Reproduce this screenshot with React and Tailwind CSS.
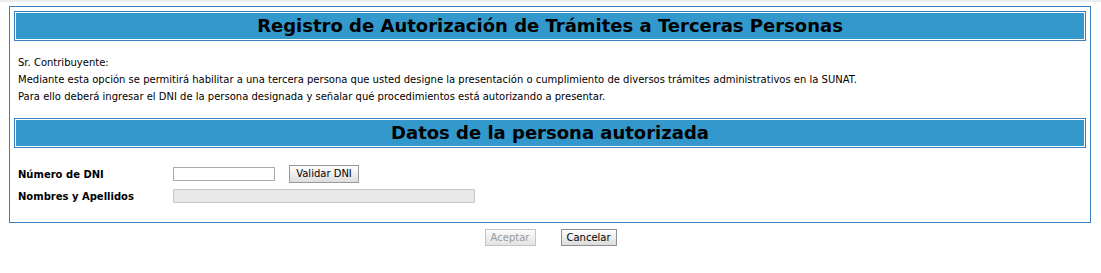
import React from 'react';

const font = { fontFamily: 'Verdana, "DejaVu Sans", sans-serif' };

function TitleBar({ children }) {
  return (
    <div className="border border-[#3b7dbd] p-px">
      <div className="h-[26px] bg-[#3399cc] flex items-center justify-center">
        <h2 className="text-[18px] font-bold text-black leading-none">{children}</h2>
      </div>
    </div>
  );
}

export default function App() {
  return (
    <div className="bg-white min-h-[273px] text-[10px] text-black" style={font}>
      <div className="h-[2px] bg-[#ececec]" />
      <div className="ml-[9px] mt-[4px] w-[1082px] border border-[#3b7dbd] p-[4px]">
        <TitleBar>Registro de Autorización de Trámites a Terceras Personas</TitleBar>

        {/* texto introductorio */}
        <div className="pl-[4px] pt-[13px] pb-[13px] leading-[17px]">
          <div>Sr. Contribuyente:</div>
          <div>Mediante esta opción se permitirá habilitar a una tercera persona que usted designe la presentación o cumplimiento de diversos trámites administrativos en la SUNAT.</div>
          <div>Para ello deberá ingresar el DNI de la persona designada y señalar qué procedimientos está autorizando a presentar.</div>
        </div>

        <TitleBar>Datos de la persona autorizada</TitleBar>

        {/* formulario */}
        <div className="pl-[4px] pt-[17px] pb-[15px] flex flex-col gap-[6px]">
          <div className="flex items-center h-[18px]">
            <label className="w-[155px] font-bold">Número de DNI</label>
            <input
              type="text"
              className="w-[102px] h-[14px] border border-[#aaaaaa] bg-white outline-none"
            />
            <button className="ml-[14px] h-[18px] w-[70px] border border-[#999999] bg-gradient-to-b from-[#ffffff] to-[#dddddd] text-[10px] text-black leading-none">
              Validar DNI
            </button>
          </div>
          <div className="flex items-center h-[14px]">
            <label className="w-[155px] font-bold">Nombres y Apellidos</label>
            <input
              type="text"
              disabled
              className="w-[302px] h-[14px] border border-[#c8c8c8] bg-[#e8e8e8] outline-none"
            />
          </div>
        </div>
      </div>

      <div className="flex justify-center gap-[25px] pt-[6px]">
        <button
          disabled
          className="h-[17px] w-[51px] border border-[#c4c4c4] bg-gradient-to-b from-[#fafafa] to-[#e4e4e4] text-[10px] text-[#9a9a9a] leading-none"
        >
          Aceptar
        </button>
        <button className="h-[17px] w-[56px] border border-[#8f8f8f] bg-gradient-to-b from-[#ffffff] to-[#dcdcdc] text-[10px] text-black leading-none">
          Cancelar
        </button>
      </div>
    </div>
  );
}
